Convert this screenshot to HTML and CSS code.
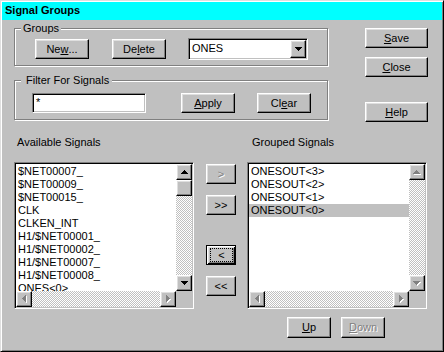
FILE: index.html
```html
<!DOCTYPE html>
<html>
<head>
<meta charset="utf-8">
<link rel="stylesheet" href="styles.css">
</head>
<body>
<div class="window">
  <div class="titlebar">Signal Groups</div>
  <div class="client">
    <div class="top">
      <div class="left-col">
        <div class="group groups">
          <span class="legend">Groups</span>
          <div class="grp-row">
            <button class="btn b54 first">Ne<u>w</u>...</button>
            <button class="btn b54 gap23">De<u>l</u>ete</button>
            <div class="combo sunken">
              <span class="combo-text">ONES</span>
              <span class="combo-btn raised">
                <svg width="7" height="4" viewBox="0 0 7 4"><path d="M0 0h7v1H0zM1 1h5v1H1zM2 2h3v1H2zM3 3h1v1H3z"/></svg>
              </span>
            </div>
          </div>
        </div>
        <div class="group filter">
          <span class="legend legend-filter">Filter For Signals</span>
          <div class="flt-row">
            <div class="textbox sunken">*</div>
            <button class="btn b54 gap35"><u>A</u>pply</button>
            <button class="btn b54 gap22">Cl<u>e</u>ar</button>
          </div>
        </div>
      </div>
      <div class="right-col">
        <button class="btn b63"><u>S</u>ave</button>
        <button class="btn b63 close"><u>C</u>lose</button>
        <button class="btn b63 help"><u>H</u>elp</button>
      </div>
    </div>

    <div class="lower">
      <div class="lbl lbl-avail">Available Signals</div>
      <div></div>
      <div class="lbl lbl-grouped">Grouped Signals</div>

      <div class="listbox sunken">
        <div class="items">
          <div class="item">$NET00007_</div>
          <div class="item">$NET00009_</div>
          <div class="item">$NET00015_</div>
          <div class="item">CLK</div>
          <div class="item">CLKEN_INT</div>
          <div class="item">H1/$NET00001_</div>
          <div class="item">H1/$NET00002_</div>
          <div class="item">H1/$NET00007_</div>
          <div class="item">H1/$NET00008_</div>
          <div class="item">ONES&lt;0&gt;</div>
        </div>
        <div class="vscroll">
          <div class="sbtn raised"><svg width="7" height="4" viewBox="0 0 7 4"><path d="M3 0h1v1H3zM2 1h3v1H2zM1 2h5v1H1zM0 3h7v1H0z"/></svg></div>
          <div class="sbtn raised"></div>
          <div class="track"></div>
          <div class="sbtn raised"><svg width="7" height="4" viewBox="0 0 7 4"><path d="M0 0h7v1H0zM1 1h5v1H1zM2 2h3v1H2zM3 3h1v1H3z"/></svg></div>
        </div>
        <div class="hscroll">
          <div class="sbtn raised"><svg width="5" height="8" viewBox="0 0 5 8"><path fill="#fff" d="M4 1h1v7H4zM3 2h1v5H3zM2 3h1v3H2zM1 4h1v1H1z"/><path fill="#808080" d="M3 0h1v7H3zM2 1h1v5H2zM1 2h1v3H1zM0 3h1v1H0z"/></svg></div>
          <div class="track"></div>
          <div class="sbtn raised"><svg width="5" height="8" viewBox="0 0 5 8"><path fill="#fff" d="M1 1h1v7H1zM2 2h1v5H2zM3 3h1v3H3zM4 4h1v1H4z"/><path fill="#808080" d="M0 0h1v7H0zM1 1h1v5H1zM2 2h1v3H2zM3 3h1v1H3z"/></svg></div>
        </div>
        <div class="corner"></div>
      </div>

      <div class="mid">
        <button class="btn b30 disabled">&gt;</button>
        <button class="btn b30 g11">&gt;&gt;</button>
        <button class="btn b30 g30 default"><span class="focus">&lt;</span></button>
        <button class="btn b30 g11">&lt;&lt;</button>
      </div>

      <div class="listbox sunken">
        <div class="items">
          <div class="item">ONESOUT&lt;3&gt;</div>
          <div class="item">ONESOUT&lt;2&gt;</div>
          <div class="item">ONESOUT&lt;1&gt;</div>
          <div class="item sel">ONESOUT&lt;0&gt;</div>
        </div>
        <div class="vscroll">
          <div class="sbtn raised"><svg width="8" height="5" viewBox="0 0 8 5"><path fill="#fff" d="M4 1h1v1H4zM3 2h3v1H3zM2 3h5v1H2zM1 4h7v1H1z"/><path fill="#808080" d="M3 0h1v1H3zM2 1h3v1H2zM1 2h5v1H1zM0 3h7v1H0z"/></svg></div>
          <div class="track"></div>
          <div class="sbtn raised"><svg width="8" height="5" viewBox="0 0 8 5"><path fill="#fff" d="M1 1h7v1H1zM2 2h5v1H2zM3 3h3v1H3zM4 4h1v1H4z"/><path fill="#808080" d="M0 0h7v1H0zM1 1h5v1H1zM2 2h3v1H2zM3 3h1v1H3z"/></svg></div>
        </div>
        <div class="hscroll">
          <div class="sbtn raised"><svg width="5" height="8" viewBox="0 0 5 8"><path fill="#fff" d="M4 1h1v7H4zM3 2h1v5H3zM2 3h1v3H2zM1 4h1v1H1z"/><path fill="#808080" d="M3 0h1v7H3zM2 1h1v5H2zM1 2h1v3H1zM0 3h1v1H0z"/></svg></div>
          <div class="track"></div>
          <div class="sbtn raised"><svg width="5" height="8" viewBox="0 0 5 8"><path fill="#fff" d="M1 1h1v7H1zM2 2h1v5H2zM3 3h1v3H3zM4 4h1v1H4z"/><path fill="#808080" d="M0 0h1v7H0zM1 1h1v5H1zM2 2h1v3H2zM3 3h1v1H3z"/></svg></div>
        </div>
        <div class="corner"></div>
      </div>
    </div>

    <div class="updown">
      <button class="btn b44 up"><u>U</u>p</button>
      <button class="btn b44 down disabled"><u>D</u>own</button>
    </div>
  </div>
</div>
</body>
</html>
```

FILE: styles.css
```css
* { box-sizing: border-box; }
html, body { margin: 0; padding: 0; }
body {
  background: #c0c0c0;
  font-family: "Liberation Sans", Arial, sans-serif;
  font-size: 11px;
  line-height: 13px;
  color: #000;
}
u { text-decoration: underline; text-underline-offset: 1px; }

.window {
  width: 444px;
  height: 352px;
  border: 1px solid;
  border-color: #dfdfdf #000 #000 #dfdfdf;
  box-shadow: inset 1px 1px #fff, inset -1px -1px #808080;
  padding: 1px;
  background: #c0c0c0;
}
.titlebar {
  height: 18px;
  background: #00ffff;
  font-weight: bold;
  padding: 2px 0 0 3px;
}
.client { padding: 8px 0 0 12px; }

.raised {
  background: #c0c0c0;
  border: 1px solid;
  border-color: #fff #000 #000 #fff;
  box-shadow: inset -1px -1px #808080, inset 1px 1px #dfdfdf;
}
.sunken {
  border: 1px solid;
  border-color: #808080 #fff #fff #808080;
  box-shadow: inset 1px 1px #000, inset -1px -1px #c0c0c0;
  padding: 1px;
  background: #fff;
}

.btn {
  font: inherit;
  color: #000;
  height: 20px;
  padding: 0;
  margin: 0;
  background: #c0c0c0;
  border: 1px solid;
  border-color: #fff #000 #000 #fff;
  box-shadow: inset -1px -1px #808080, inset 1px 1px #dfdfdf;
  display: flex;
  align-items: center;
  justify-content: center;
  flex: none;
}
.b54 { width: 54px; }
.b63 { width: 63px; }
.b30 { width: 30px; }
.b44 { width: 44px; }
.disabled { color: #808080; text-shadow: 1px 1px #fff; }
.disabled u { text-decoration-color: #808080; }

.top { display: flex; align-items: flex-start; }
.left-col { width: 314px; }
.right-col { margin-left: 37px; display: flex; flex-direction: column; }
.right-col .close { margin-top: 9px; }
.right-col .help { margin-top: 25px; }

.group {
  border: 1px solid #808080;
  box-shadow: 1px 1px #fff, inset 1px 1px #fff;
}
.groups { height: 38px; }
.filter { height: 40px; margin-top: 14px; }
.legend {
  display: block;
  width: max-content;
  margin: -7px 0 -6px 6px;
  padding: 0 2px;
  background: #c0c0c0;
}
.legend-filter { padding: 0 3px 0 5px; }

.grp-row { display: flex; align-items: center; height: 22px; margin-top: 9px; padding-left: 20px; }
.gap23 { margin-left: 23px; }
.gap22 { margin-left: 22px; }
.gap35 { margin-left: 35px; }

.combo {
  width: 120px;
  height: 22px;
  margin-left: 22px;
  display: flex;
  align-items: stretch;
}
.combo-text { flex: 1; padding: 2px 0 0 2px; }
.combo-btn {
  width: 16px;
  display: flex;
  align-items: center;
  justify-content: center;
}

.flt-row { display: flex; align-items: center; height: 20px; margin-top: 12px; padding-left: 17px; }
.textbox { width: 114px; height: 20px; padding: 2px 0 0 3px; }

.lower {
  display: grid;
  grid-template-columns: 180px 53px 180px;
  grid-template-rows: 13px 147px;
  row-gap: 13px;
  margin-top: 14px;
}
.lbl-avail { padding-left: 3px; }
.lbl-grouped { padding-left: 5px; }

.listbox {
  height: 147px;
  display: grid;
  grid-template-columns: 160px 16px;
  grid-template-rows: 127px 16px;
}
.items { overflow: hidden; padding-top: 1px; background: #fff; }
.item { height: 13px; padding-left: 2px; white-space: nowrap; }
.item.sel { background: #c0c0c0; }
.vscroll { display: flex; flex-direction: column; }
.hscroll { display: flex; }
.sbtn {
  width: 16px;
  height: 16px;
  flex: none;
  display: flex;
  align-items: center;
  justify-content: center;
}
.sbtn svg { display: block; }
.track {
  flex: 1;
  background-color: #c0c0c0;
  background-image: repeating-conic-gradient(#fff 0 25%, #c0c0c0 0 50%);
  background-size: 2px 2px;
}
.corner { background: #c0c0c0; }

.mid { display: flex; flex-direction: column; padding: 2px 0 0 12px; }
.g11 { margin-top: 11px; }
.g30 { margin-top: 30px; }
.default {
  border: 1px solid #000;
  box-shadow: inset 1px 1px #fff, inset -1px -1px #000, inset 2px 2px #dfdfdf, inset -2px -2px #808080;
  align-items: stretch;
  justify-content: stretch;
}
.focus {
  flex: 1;
  margin: 2px 2px 2px 3px;
  border: 1px dotted #000;
  display: flex;
  align-items: center;
  justify-content: center;
}

.updown { display: flex; margin-top: 8px; padding-left: 273px; }
.updown .btn { height: 21px; }
.updown .down { margin-left: 10px; }
svg path:not([fill]) { fill: #000; }
```
